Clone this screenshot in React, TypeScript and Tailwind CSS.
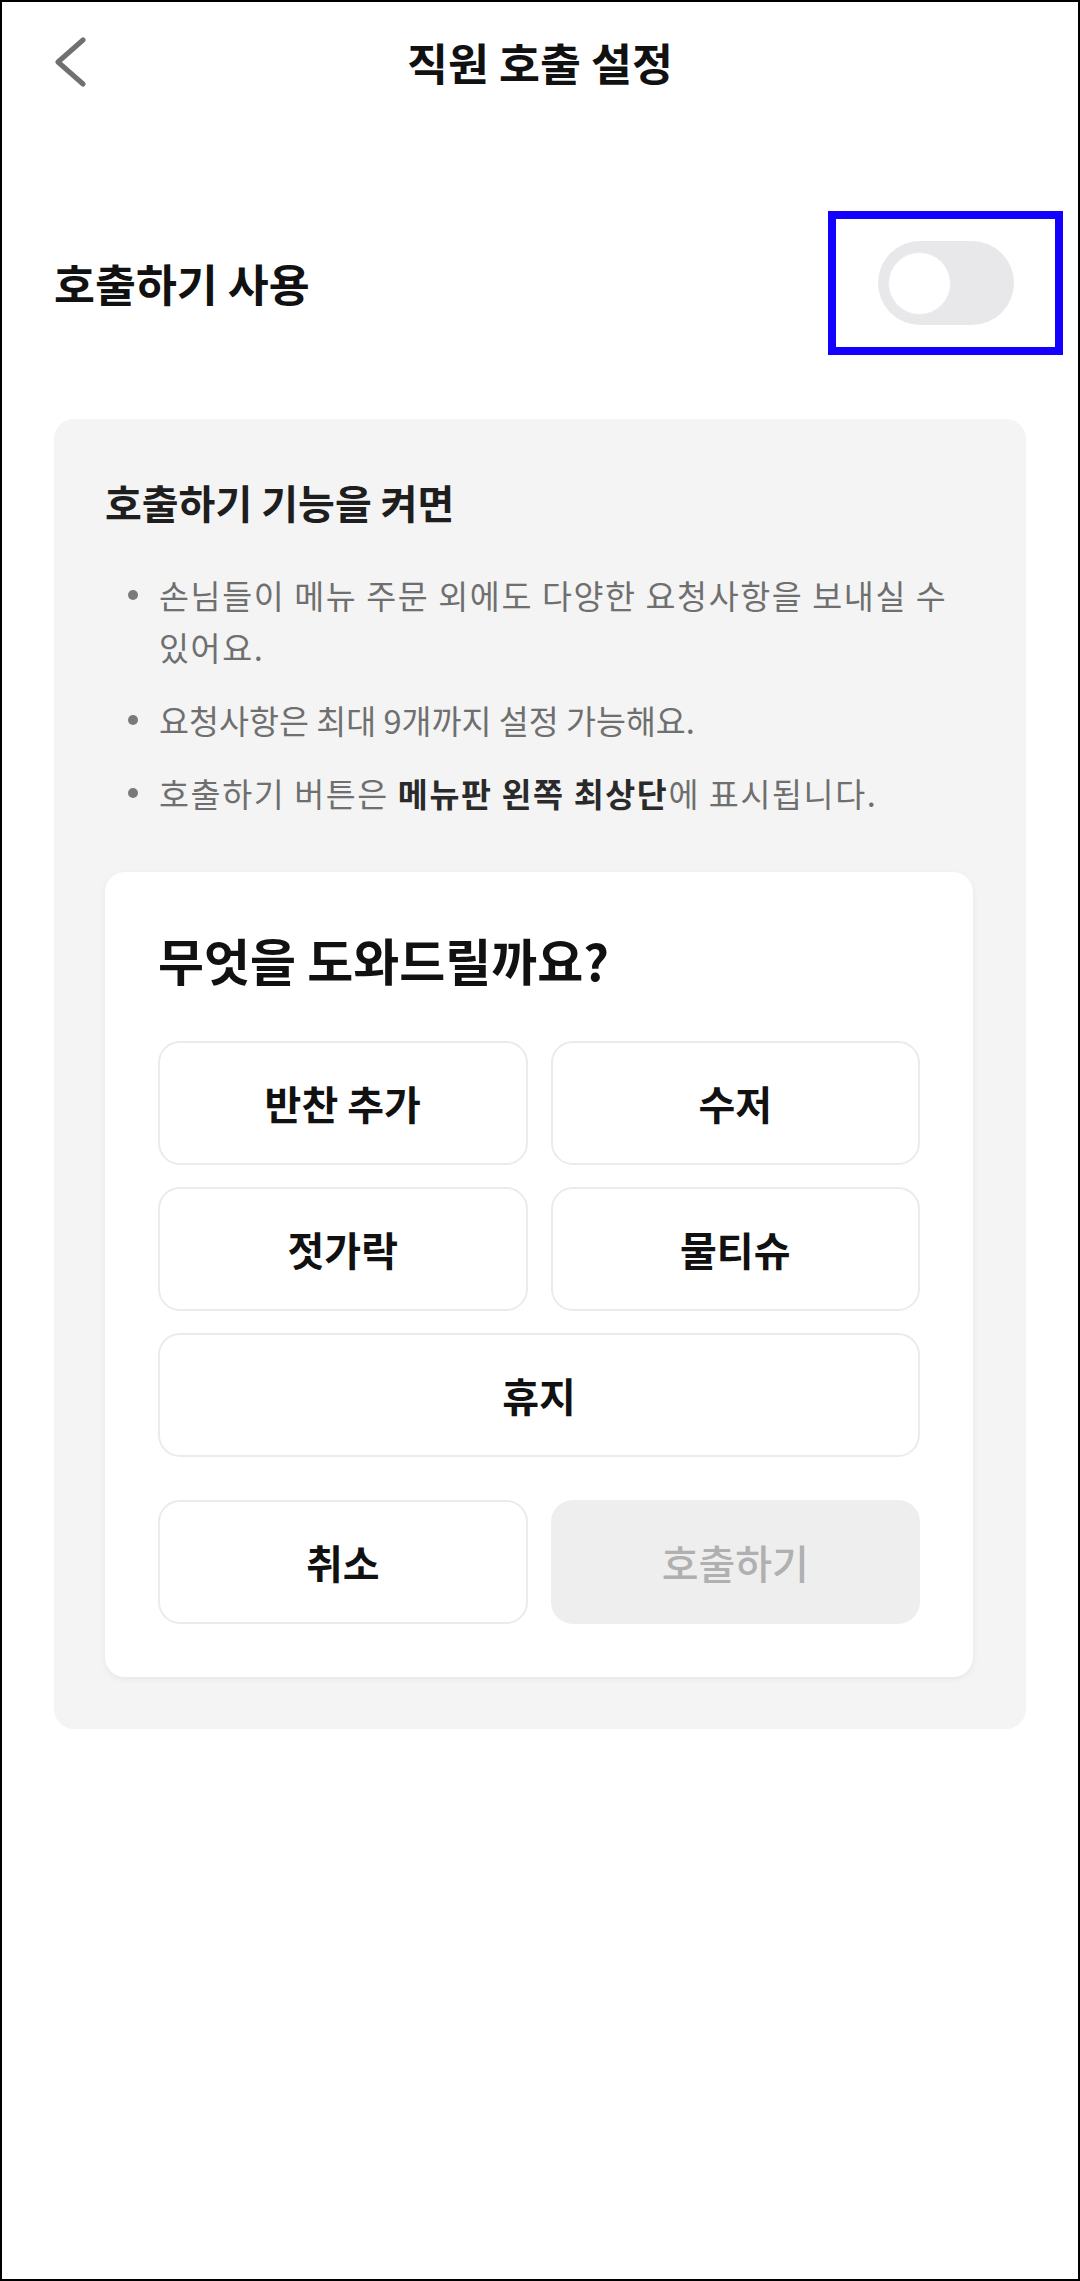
import React from "react";

const FONT = { fontFamily: '"Noto Sans CJK KR", "Noto Sans", sans-serif' };

const options = ["반찬 추가", "수저", "젓가락", "물티슈"];

const Bullet = ({ children, wide }: { children: React.ReactNode; wide?: boolean }) => (
  <li className="flex">
    <div className="h-[52px] w-[54px] shrink-0 flex items-center">
      <span className="ml-[23px] w-[10px] h-[10px] rounded-full bg-[#7a7a7a]" />
    </div>
    <p
      className={
        wide
          ? "text-[32.6px] leading-[52px] text-[#6f6f6f] break-keep tracking-[1.6px]"
          : "text-[32.6px] leading-[52px] text-[#6f6f6f] break-keep"
      }
    >
      {children}
    </p>
  </li>
);

const App = () => {
  return (
    <div className="w-[1080px] h-[2281px] border-2 border-black bg-white" style={FONT}>
      {/* Header */}
      <div className="h-[120px] grid grid-cols-[1fr_auto_1fr] items-center">
        <div className="pl-[53px] flex items-center">
          <svg width="31" height="50" viewBox="0 0 31 50" fill="none">
            <path d="M28 3 L3 25 L28 47" stroke="#707070" strokeWidth="5" strokeLinecap="round" strokeLinejoin="round" />
          </svg>
        </div>
        <h1 className="text-[44.5px] leading-[58px] font-semibold text-[#111]">직원 호출 설정</h1>
        <div />
      </div>

      {/* Toggle row */}
      <div className="mt-[89px] h-[144px] pl-[52px] pr-[15px] flex items-center justify-between">
        <span className="text-[44.5px] leading-[58px] font-semibold text-[#111]">호출하기 사용</span>
        <div className="w-[235px] h-[144px] border-8 border-[#1400ff] flex items-center justify-center">
          <div className="w-[136px] h-[84px] rounded-full bg-[#e8e8ea] flex items-center pl-[10px]">
            <div className="w-[63px] h-[63px] rounded-full bg-white border border-[#ececee]" />
          </div>
        </div>
      </div>

      {/* Info card */}
      <div className="mt-[64px] mx-[52px] bg-[#f4f4f4] rounded-[20px] pt-[57px] pb-[52px] pl-[51px] pr-[53px]">
        <h2 className="text-[40px] leading-[52px] font-semibold text-[#1e1e1e]">호출하기 기능을 켜면</h2>
        <ul className="mt-[41px] flex flex-col gap-[21px]">
          <Bullet wide>손님들이 메뉴 주문 외에도 다양한 요청사항을 보내실 수 있어요.</Bullet>
          <Bullet>요청사항은 최대 9개까지 설정 가능해요.</Bullet>
          <Bullet wide>
            호출하기 버튼은 <b className="font-bold text-[#2a2a2a]">메뉴판 왼쪽 최상단</b>에 표시됩니다.
          </Bullet>
        </ul>

        {/* Preview */}
        <div className="mt-[53px] bg-white rounded-[20px] shadow-[0_2px_6px_rgba(0,0,0,0.06)] pt-[57px] pb-[53px] px-[53px]">
          <h3 className="text-[50px] leading-[60px] font-bold text-[#111]">무엇을 도와드릴까요?</h3>
          <div className="mt-[52px] grid grid-cols-2 gap-x-[23px] gap-y-[22px]">
            {options.map((o) => (
              <button
                key={o}
                className="h-[124px] rounded-[22px] border-2 border-[#ebebeb] bg-white text-[40px] font-semibold text-[#111]"
              >
                {o}
              </button>
            ))}
            <button className="col-span-2 h-[124px] rounded-[22px] border-2 border-[#ebebeb] bg-white text-[40px] font-semibold text-[#111]">
              휴지
            </button>
          </div>
          <div className="mt-[43px] grid grid-cols-2 gap-x-[23px]">
            <button className="h-[124px] rounded-[22px] border-2 border-[#ebebeb] bg-white text-[40px] font-semibold text-[#111]">
              취소
            </button>
            <button className="h-[124px] rounded-[22px] bg-[#eeeeee] text-[40px] font-medium text-[#b0b0b0]">
              호출하기
            </button>
          </div>
        </div>
      </div>
    </div>
  );
};

export default App;
